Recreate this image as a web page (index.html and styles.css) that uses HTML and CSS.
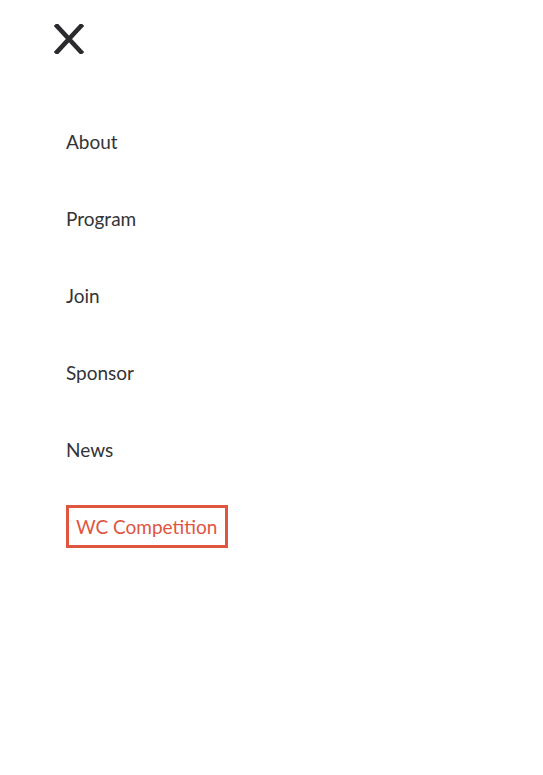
FILE: index.html
```html
<!DOCTYPE html>
<html lang="en">
<head>
<meta charset="utf-8">
<title>Menu</title>
<link rel="stylesheet" href="styles.css">
</head>
<body>
<div class="menu">
  <header class="menu-header">
    <button class="close" aria-label="Close menu">
      <svg width="30" height="30" viewBox="0 0 30 30" aria-hidden="true">
        <path d="M3 2 L27 28 M27 2 L3 28" stroke="#2a2a2f" stroke-width="4.6" stroke-linecap="square" fill="none"/>
      </svg>
    </button>
  </header>
  <nav>
    <ul class="nav-list">
      <li><a href="#" class="nav-link">About</a></li>
      <li><a href="#" class="nav-link">Program</a></li>
      <li><a href="#" class="nav-link">Join</a></li>
      <li><a href="#" class="nav-link">Sponsor</a></li>
      <li><a href="#" class="nav-link">News</a></li>
      <li><a href="#" class="nav-link nav-cta">WC Competition</a></li>
    </ul>
  </nav>
</div>
</body>
</html>
```

FILE: styles.css
```css
html, body {
  margin: 0;
  padding: 0;
  background: #ffffff;
}

body {
  font-family: Lato, "Open Sans", sans-serif;
  color: #333338;
}

.menu {
  display: flex;
  flex-direction: column;
}

.menu-header {
  padding: 24px 0 0 54px;
  height: 30px;
}

.close {
  display: block;
  border: 0;
  background: none;
  padding: 0;
  margin: 0;
  width: 30px;
  height: 30px;
  cursor: pointer;
}

.close svg {
  display: block;
}

.nav-list {
  list-style: none;
  margin: 66px 0 0 0;
  padding: 0 0 0 66px;
  display: flex;
  flex-direction: column;
  align-items: flex-start;
  gap: 34px;
}

.nav-list li {
  height: 43px;
}

.nav-link {
  display: inline-block;
  font-size: 19px;
  line-height: 43px;
  color: #333338;
  text-decoration: none;
}

.nav-cta {
  color: #e0553f;
  border: 3px solid #e0553f;
  line-height: 37px;
  padding: 0 8px 0 7px;
}
```
